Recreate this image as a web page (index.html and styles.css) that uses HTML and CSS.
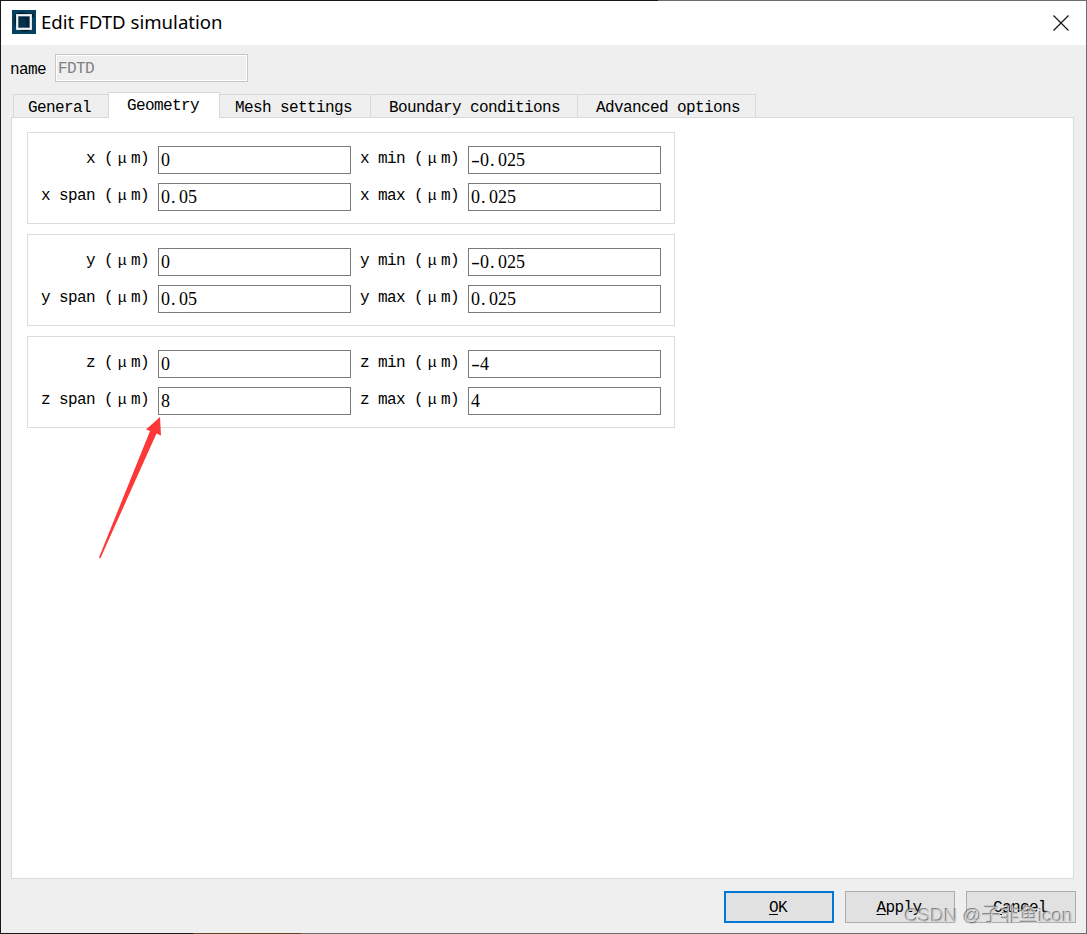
FILE: index.html
```html
<!DOCTYPE html>
<html lang="en">
<head>
<meta charset="utf-8">
<title>Edit FDTD simulation</title>
<link rel="stylesheet" href="styles.css">
</head>
<body>
<div class="window">
  <header class="titlebar">
    <svg class="app-icon" width="24" height="24" viewBox="0 0 24 24">
      <rect width="24" height="24" fill="#04405f"/>
      <path d="M3 5Q7 1 14 3L22 4V7L19 8V18L17 21Q11 23 8 20L4 17Q1 11 3 5Z" fill="#03202f"/>
      <rect x="5.2" y="5.2" width="13.6" height="13.6" fill="#04304a" stroke="#f2f5f7" stroke-width="2.2"/>
      <path d="M10 7h7v10h-4q4-5-3-10z" fill="#032438"/>
    </svg>
    <h1 class="title">Edit FDTD simulation</h1>
    <svg class="close" width="16" height="16" viewBox="0 0 16 16"><path d="M.5 .5L15.5 15.5M15.5 .5L.5 15.5" stroke="#111" stroke-width="1.15"/></svg>
  </header>
  <div class="name-row"><span class="name-label">name</span><div class="name-field">FDTD</div></div>
  <nav class="tabs">
    <div class="tab general">General</div>
    <div class="tab active">Geometry</div>
    <div class="tab mesh">Mesh settings</div>
    <div class="tab boundary">Boundary conditions</div>
    <div class="tab advanced">Advanced options</div>
  </nav>
  <main class="panel">
    <section class="group">
      <label>x (<i class="mu">μ</i>m)</label><div class="field">0</div><label>x min (<i class="mu">μ</i>m)</label><div class="field"><b class="minus">-</b>0<b>.</b>025</div>
      <label>x span (<i class="mu">μ</i>m)</label><div class="field">0<b>.</b>05</div><label>x max (<i class="mu">μ</i>m)</label><div class="field">0<b>.</b>025</div>
    </section>
    <section class="group">
      <label>y (<i class="mu">μ</i>m)</label><div class="field">0</div><label>y min (<i class="mu">μ</i>m)</label><div class="field"><b class="minus">-</b>0<b>.</b>025</div>
      <label>y span (<i class="mu">μ</i>m)</label><div class="field">0<b>.</b>05</div><label>y max (<i class="mu">μ</i>m)</label><div class="field">0<b>.</b>025</div>
    </section>
    <section class="group">
      <label>z (<i class="mu">μ</i>m)</label><div class="field">0</div><label>z min (<i class="mu">μ</i>m)</label><div class="field"><b class="minus">-</b>4</div>
      <label>z span (<i class="mu">μ</i>m)</label><div class="field">8</div><label>z max (<i class="mu">μ</i>m)</label><div class="field">4</div>
    </section>
  </main>
  <footer class="actions">
    <div class="button primary"><span><u>O</u>K</span></div>
    <div class="button"><span><u>A</u>pply</span></div>
    <div class="button"><span><u>C</u>ancel</span></div>
  </footer>
  <svg class="arrow" width="64" height="144" viewBox="98 416 64 144"><path d="M160 417L146 429.500L150 431L99 557.500L100.300 558.500L156.500 433.500L161 435.500Z" fill="#fc3838"/></svg>
  <div class="watermark">CSDN @子非鱼icon</div>
</div>
</body>
</html>
```
FILE: styles.css
```css
* { box-sizing: border-box; }
body {
  margin: 0;
  font: 16px/18px "Liberation Mono", "Noto Sans CJK SC", monospace;
  letter-spacing: -0.602px;
  color: #000;
}
.window {
  position: relative;
  display: flex;
  flex-direction: column;
  width: 1087px;
  height: 934px;
  background: #efefef;
  border-left: 1px solid #18181a;
  border-right: 1px solid #6c6c6c;
  overflow: hidden;
}
.window::before, .window::after { content: ""; height: 1px; flex: none; }
.window::before { background: linear-gradient(90deg, #18181a 657px, #6c6c6c 657px); }
.window::after { background: linear-gradient(90deg, #18181a 192px, #5e4523 192px, #5e4523 300px, #6c6c6c 300px); }
.titlebar {
  display: flex;
  align-items: center;
  flex: none;
  height: 44px;
  padding: 0 17px 0 11px;
  background: #fff;
}
.app-icon { margin: 0 5px 2px 0; }
.title {
  margin: 0 0 2px;
  font: 400 18.6px/24px "Noto Sans", sans-serif;
  letter-spacing: 0;
}
.close { margin: 0 0 1px auto; }
.name-row {
  display: flex;
  align-items: center;
  flex: none;
  gap: 9px;
  height: 47px;
  padding: 0 0 1px 9px;
}
.name-label { width: 36px; padding-top: 3px; white-space: nowrap; }
.name-field {
  width: 193px;
  height: 28px;
  padding: 5px 2px;
  border: 1px solid #c8c8c8;
  box-shadow: inset 0 0 0 1px #fff;
  color: #808080;
}
.tabs {
  display: flex;
  align-items: flex-end;
  flex: none;
  height: 25px;
  padding-left: 12px;
}
.tab {
  height: 23px;
  padding-top: 4px;
  border: 1px solid #d9d9d9;
  border-width: 1px 1px 0 0;
  white-space: nowrap;
}
.general { width: 95px; padding-left: 14px; border-left-width: 1px; border-right: 0; }
.active {
  z-index: 1;
  width: 112px;
  height: 26px;
  margin-bottom: -1px;
  padding: 4px 0 0 18px;
  border-left-width: 1px;
  background: #fff;
}
.mesh { width: 151px; padding-left: 15px; }
.boundary { width: 207px; padding-left: 18px; }
.advanced { width: 178px; padding-left: 18px; }
.panel {
  display: flex;
  flex-direction: column;
  gap: 10px;
  flex: none;
  width: 1063px;
  height: 762px;
  margin-left: 10px;
  padding: 14px 0 0 15px;
  border: 1px solid #d9d9d9;
  background: #fff;
}
.group {
  display: grid;
  grid-template-columns: 121px 202px 108px 193px;
  grid-auto-rows: 28px;
  row-gap: 9px;
  width: 648px;
  height: 92px;
  padding: 13px 0 0 9px;
  border: 1px solid #dcdcdc;
}
.group label {
  height: 28px;
  padding: 4px 9px 0 0;
  text-align: right;
  white-space: nowrap;
}
.mu {
  display: inline-block;
  width: 18px;
  font-style: normal;
  font-size: 15px;
  text-align: center;
}
.field {
  width: 193px;
  height: 28px;
  padding: 4px 2px;
  border: 1px solid #7a7a7a;
  background: #fff;
  font-family: "Liberation Serif", serif;
  font-size: 18px;
  letter-spacing: 0;
  white-space: nowrap;
}
/* Punctuation takes the same 9px advance as a digit. */
.field b { display: inline-block; width: 9px; padding-left: 1px; font-weight: 400; }
.field .minus { padding-left: 0; transform: scaleX(1.5); transform-origin: 0 50%; }
.actions {
  display: flex;
  justify-content: flex-end;
  flex: 1;
  gap: 11px;
  padding: 12px 10px 0 0;
}
.button {
  width: 110px;
  height: 32px;
  padding: 7px 2px 0 0;
  border: 1px solid #adadad;
  background: #e1e1e1;
  text-align: center;
}
.primary { border: 2px solid #0078d7; padding-top: 6px; }
.button u { text-underline-offset: 2px; text-decoration-thickness: 1px; }
.arrow { position: absolute; left: 97px; top: 416px; }
.watermark {
  position: absolute;
  right: 13px;
  bottom: 6px;
  font: 18.8px/24px "Liberation Sans", "Noto Sans CJK SC", sans-serif;
  letter-spacing: 0;
  color: rgba(205, 205, 205, 0.85);
  text-shadow: -1px -1px 0 rgba(105, 105, 105, 0.8);
  white-space: nowrap;
}
```
